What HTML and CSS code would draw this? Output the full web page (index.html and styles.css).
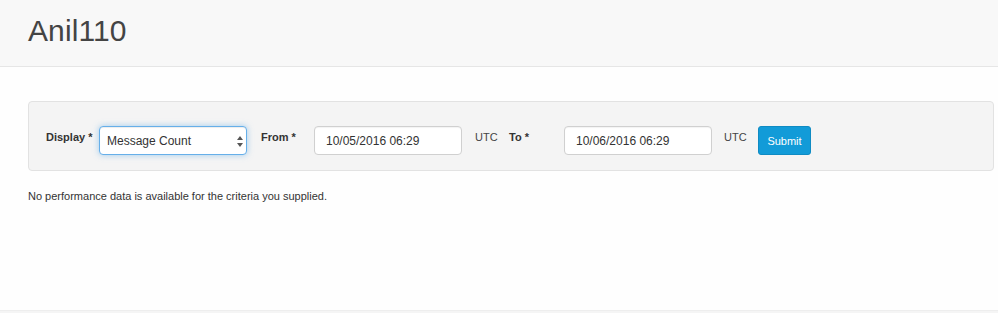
FILE: index.html
```html
<!DOCTYPE html>
<html>
<head>
<meta charset="utf-8">
<title>Anil110</title>
<link rel="stylesheet" href="styles.css">
</head>
<body>
<div class="page">
  <header class="page-header">
    <h1 class="title">Anil110</h1>
  </header>
  <main class="content">
    <form class="filter-panel">
      <label class="field-label">Display *</label>
      <div class="select-wrap">
        <div class="select-box">Message Count</div>
        <svg class="select-arrows" width="6" height="11" viewBox="0 0 6 11"><path d="M3 0 L6 4 L0 4 Z M0 7 L6 7 L3 11 Z" fill="#555"/></svg>
      </div>
      <label class="field-label label-from">From *</label>
      <div class="text-input">10/05/2016 06:29</div>
      <span class="tz">UTC</span>
      <label class="field-label label-to">To *</label>
      <div class="text-input">10/06/2016 06:29</div>
      <span class="tz tz-last">UTC</span>
      <button type="button" class="btn-submit">Submit</button>
    </form>
    <p class="empty-msg">No performance data is available for the criteria you supplied.</p>
  </main>
  <footer class="page-footer"></footer>
</div>
</body>
</html>
```

FILE: styles.css
```css
html, body {
  margin: 0;
  padding: 0;
  background: #fefefe;
}
body {
  font-family: "Liberation Sans", Arial, Helvetica, sans-serif;
  color: #333;
}
.page {
  display: flex;
  flex-direction: column;
  height: 100vh;
  overflow: hidden;
}
.page-header {
  background: #f8f8f8;
  border-bottom: 1px solid #e6e6e6;
  height: 67px;
  box-sizing: border-box;
  padding: 13px 0 0 28px;
  flex: 0 0 auto;
}
.title {
  margin: 0;
  font-weight: normal;
  font-size: 30px;
  line-height: 36px;
  color: #444;
  letter-spacing: 0.1px;
}
.content {
  flex: 1 1 auto;
  padding: 34px 4px 0 28px;
}
.filter-panel {
  display: flex;
  align-items: flex-start;
  background: #f4f4f4;
  border: 1px solid #e2e2e2;
  border-radius: 4px;
  padding: 24px 17px 15px;
  margin: 0;
}
.field-label {
  font-size: 11px;
  font-weight: bold;
  line-height: 16px;
  padding-top: 3px;
  color: #333;
  flex: 0 0 auto;
}
.field-label:first-child { width: 53px; }
.label-from { width: 53px; margin-left: 14px; }
.label-to { width: 55px; }
.select-wrap {
  position: relative;
  width: 148px;
  height: 29px;
  flex: 0 0 auto;
}
.select-box {
  box-sizing: border-box;
  width: 100%;
  height: 100%;
  background: #fff;
  border: 1px solid #66afe9;
  border-radius: 4px;
  box-shadow: inset 0 1px 1px rgba(0,0,0,.075), 0 0 6px rgba(102,175,233,.6);
  font-size: 12px;
  line-height: 28px;
  padding-left: 7px;
  color: #333;
}
.select-arrows {
  position: absolute;
  right: 4px;
  top: 10px;
}
.text-input {
  box-sizing: border-box;
  width: 148px;
  height: 29px;
  flex: 0 0 auto;
  background: #fff;
  border: 1px solid #d0d0d0;
  border-radius: 4px;
  box-shadow: inset 0 1px 1px rgba(0,0,0,.05);
  font-size: 12px;
  line-height: 28px;
  padding-left: 11px;
  color: #333;
}
.tz {
  font-size: 11px;
  line-height: 16px;
  padding-top: 3px;
  width: 34px;
  margin-left: 13px;
  color: #444;
  flex: 0 0 auto;
}
.tz-last { margin-left: 12px; }
.btn-submit {
  box-sizing: border-box;
  width: 53px;
  height: 29px;
  background: #129bd8;
  border: 1px solid #0f8bc3;
  border-radius: 3px;
  color: #fff;
  font-family: inherit;
  font-size: 11px;
  padding: 0;
  flex: 0 0 auto;
}
.empty-msg {
  margin: 17px 0 0 0;
  font-size: 11px;
  line-height: 16px;
  color: #333;
}
.page-footer {
  flex: 0 0 3px;
  box-sizing: border-box;
  background: #f5f5f5;
  border-top: 1px solid #eeeeee;
}
```
